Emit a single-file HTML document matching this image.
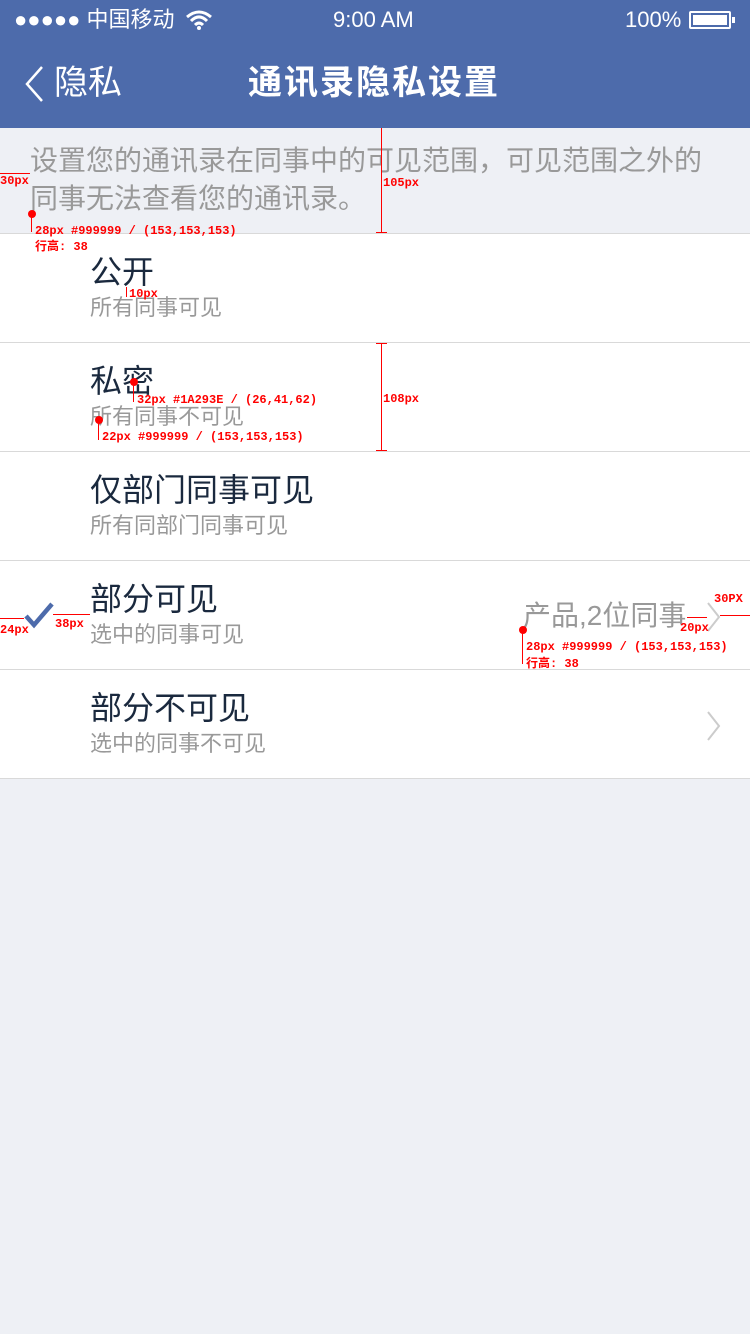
<!DOCTYPE html><html><head><meta charset="utf-8"><style>
*{margin:0;padding:0;box-sizing:border-box}
body{width:750px;height:1334px;background:#eef0f5;position:relative;overflow:hidden;font-family:"Liberation Sans","Noto Sans CJK SC",sans-serif}
.a{position:absolute;white-space:nowrap}
.hdr{position:absolute;left:0;top:0;width:750px;height:128px;background:#4d6bab}
.row{position:absolute;left:0;width:750px;height:109px;background:#fff;border-top:1px solid #d9d9d9}
.t{position:absolute;left:90px;top:18px;font-size:32px;color:#1a293e;line-height:40px}
.s{position:absolute;left:90px;top:60px;font-size:22px;color:#999;line-height:28px}
.r{color:#f00;font-size:12px;font-weight:bold;font-family:"Liberation Mono","Noto Sans CJK SC",monospace;position:absolute;white-space:nowrap}
.vl{position:absolute;width:1px;background:#f00}
.hl{position:absolute;height:1px;background:#f00}
.dot{position:absolute;width:8px;height:8px;border-radius:50%;background:#f00}
</style></head><body>
<div class="hdr"></div>
<div class="a" style="left:14px;top:7px;color:#fff;font-size:22px;line-height:26px">●●●●● 中国移动</div>
<svg class="a" style="left:185px;top:10px" width="28" height="20" viewBox="0 0 28 20"><path d="M2 7Q14-3 26 7M6 11Q14 3 22 11M10 15Q14 11 18 15" stroke="#fff" stroke-width="3" fill="none"/><circle cx="14" cy="18" r="2" fill="#fff"/></svg>
<div class="a" style="left:333px;top:7px;color:#fff;font-size:22px;line-height:26px">9:00 AM</div>
<div class="a" style="left:625px;top:7px;color:#fff;font-size:22px;line-height:26px">100%</div>
<div class="a" style="left:689px;top:11px;width:42px;height:18px;border:2px solid #fff;border-radius:2px;padding:2px"><div style="background:#fff;width:100%;height:100%"></div></div>
<div class="a" style="left:732px;top:17px;width:3px;height:6px;background:#fff"></div>
<svg class="a" style="left:22px;top:64px" width="24" height="40"><path d="M20 3L5 20L20 37" stroke="#fff" stroke-width="2.5" fill="none"/></svg>
<div class="a" style="left:54px;top:63px;color:#fff;font-size:34px;line-height:40px">隐私</div>
<div class="a" style="left:248px;top:63px;color:#fff;font-size:34px;line-height:40px;font-weight:bold;letter-spacing:2px">通讯录隐私设置</div>
<div class="a" style="left:30px;top:142px;width:690px;font-size:28px;line-height:38px;color:#999;white-space:normal">设置您的通讯录在同事中的可见范围，可见范围之外的同事无法查看您的通讯录。</div>
<div class="row" style="top:233px"><div class="t">公开</div><div class="s">所有同事可见</div></div>
<div class="row" style="top:342px"><div class="t">私密</div><div class="s">所有同事不可见</div></div>
<div class="row" style="top:451px"><div class="t">仅部门同事可见</div><div class="s">所有同部门同事可见</div></div>
<div class="row" style="top:560px"><div class="t">部分可见</div><div class="s">选中的同事可见</div>
<svg class="a" style="left:23px;top:40px" width="32" height="28"><path d="M3 15L11 24L29 3" stroke="#4d6bab" stroke-width="4.5" fill="none"/></svg>
<div class="a" style="left:523px;top:36px;font-size:28px;color:#999;line-height:38px">产品,2位同事</div>
<svg class="a" style="left:705px;top:40px" width="16" height="32"><path d="M3 2L14 16L3 30" stroke="#ccc" stroke-width="2" fill="none"/></svg>
</div>
<div class="row" style="top:669px;border-bottom:1px solid #d9d9d9;height:110px"><div class="t">部分不可见</div><div class="s">选中的同事不可见</div>
<svg class="a" style="left:705px;top:40px" width="16" height="32"><path d="M3 2L14 16L3 30" stroke="#ccc" stroke-width="2" fill="none"/></svg>
</div>
<div class="hl" style="left:0;top:173px;width:30px"></div><div class="r" style="left:0;top:174px">30px</div>
<div class="dot" style="left:28px;top:210px"></div><div class="vl" style="left:31px;top:214px;height:18px"></div>
<div class="r" style="left:35px;top:224px">28px #999999 / (153,153,153)</div>
<div class="r" style="left:35px;top:237px">行高: 38</div>
<div class="vl" style="left:381px;top:128px;height:105px"></div><div class="hl" style="left:376px;top:232px;width:11px"></div>
<div class="r" style="left:383px;top:176px">105px</div>
<div class="vl" style="left:126px;top:287px;height:10px"></div><div class="r" style="left:129px;top:287px">10px</div>
<div class="vl" style="left:381px;top:343px;height:108px"></div><div class="hl" style="left:376px;top:343px;width:11px"></div><div class="hl" style="left:376px;top:450px;width:11px"></div>
<div class="r" style="left:383px;top:392px">108px</div>
<div class="dot" style="left:130px;top:378px"></div><div class="vl" style="left:133px;top:382px;height:20px"></div>
<div class="r" style="left:137px;top:393px">32px #1A293E / (26,41,62)</div>
<div class="dot" style="left:95px;top:416px"></div><div class="vl" style="left:98px;top:420px;height:20px"></div>
<div class="r" style="left:102px;top:430px">22px #999999 / (153,153,153)</div>
<div class="hl" style="left:0;top:618px;width:24px"></div><div class="r" style="left:0;top:623px">24px</div>
<div class="hl" style="left:53px;top:614px;width:37px"></div><div class="r" style="left:55px;top:617px">38px</div>
<div class="dot" style="left:519px;top:626px"></div><div class="vl" style="left:522px;top:630px;height:34px"></div>
<div class="r" style="left:526px;top:640px">28px #999999 / (153,153,153)</div>
<div class="r" style="left:526px;top:654px">行高: 38</div>
<div class="hl" style="left:687px;top:617px;width:20px"></div><div class="r" style="left:680px;top:621px">20px</div>
<div class="hl" style="left:720px;top:615px;width:30px"></div><div class="r" style="left:714px;top:592px">30PX</div>
</body></html>
